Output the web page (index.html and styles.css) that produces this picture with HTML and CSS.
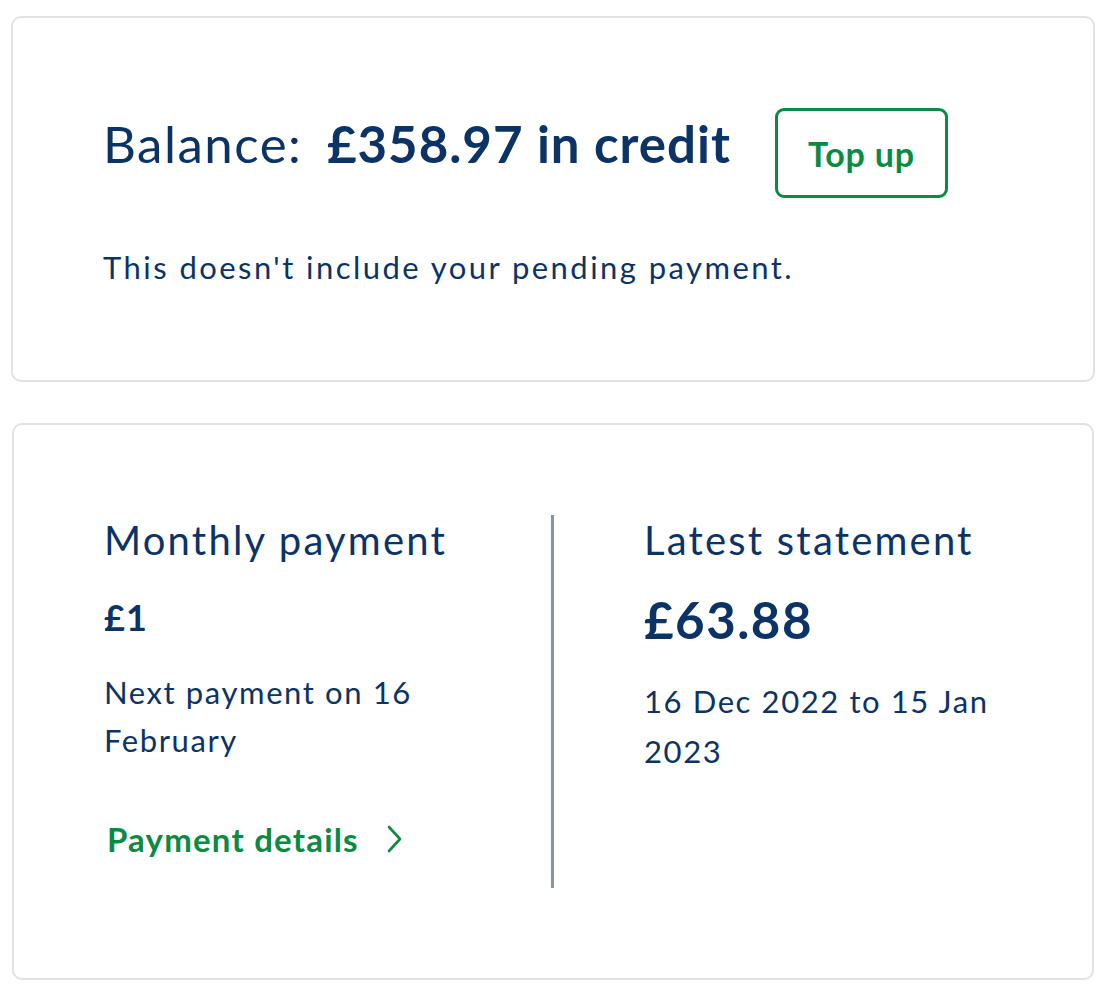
FILE: index.html
```html
<!DOCTYPE html>
<html lang="en">
<head>
<meta charset="utf-8">
<title>Balance</title>
<link rel="stylesheet" href="styles.css">
</head>
<body>
<main class="page">
  <section class="card balance-card">
    <div class="balance-row">
      <h1 class="balance-title">Balance: <strong class="balance-amount">£358.97 in credit</strong></h1>
      <button class="btn-outline" type="button">Top up</button>
    </div>
    <p class="body-text">This doesn't include your pending payment.</p>
  </section>

  <section class="card summary-card">
    <div class="col col-left">
      <h2 class="col-title">Monthly payment</h2>
      <p class="amount-small">£1</p>
      <p class="body-text">Next payment on 16 February</p>
      <a class="link" href="#">Payment details
        <svg class="chev" width="16" height="28" viewBox="0 0 16 28" aria-hidden="true"><path d="M2 2 L13 14 L2 26" fill="none" stroke="currentColor" stroke-width="2.6" stroke-linecap="round" stroke-linejoin="round"/></svg>
      </a>
    </div>
    <div class="divider"></div>
    <div class="col col-right">
      <h2 class="col-title">Latest statement</h2>
      <p class="amount-large">£63.88</p>
      <p class="body-text">16 Dec 2022 to 15 Jan 2023</p>
    </div>
  </section>
</main>
</body>
</html>
```

FILE: styles.css
```css
* { box-sizing: border-box; }
html, body { margin: 0; padding: 0; background: #ffffff; }
body {
  font-family: Lato, "Noto Sans", sans-serif;
  color: #0b3366;
}
.page {
  padding: 16px 8px 0 11px;
  display: flex;
  flex-direction: column;
  gap: 41px;
}
.card {
  background: #fff;
  border: 2px solid #e2e2e4;
  border-radius: 10px;
}
.balance-card {
  width: 1084px;
  height: 366px;
  padding: 90px 0 0 90px;
}
.balance-row {
  display: flex;
  align-items: flex-start;
  gap: 44px;
}
.balance-title {
  margin: 10px 0 0;
  font-size: 51px;
  font-weight: 400;
  line-height: 51px;
  letter-spacing: 1.5px;
}
.balance-amount {
  font-weight: 700;
  margin-left: 10px;
  letter-spacing: 1px;
}
.btn-outline {
  font-family: inherit;
  width: 173px;
  height: 90px;
  border: 3px solid #0b8a43;
  border-radius: 9px;
  background: #fff;
  color: #0b8a43;
  font-size: 34px;
  font-weight: 700;
  letter-spacing: 0.8px;
  padding: 0;
}
.body-text {
  margin: 0;
  font-size: 31px;
  line-height: 48px;
  letter-spacing: 1.6px;
}
.balance-card .body-text {
  margin-top: 45px;
  letter-spacing: 2.45px;
}
.summary-card {
  margin-left: 1px;
  width: 1082px;
  height: 557px;
  display: flex;
  padding: 91px 93px 0 90px;
}
.col-left { width: 447px; flex: 0 0 447px; }
.col-left .body-text { max-width: 400px; margin: 29px 0 0; }
.col-right { padding-left: 90px; flex: 1 1 auto; }
.col-right .body-text { line-height: 50px; margin-top: 28px; }
.divider {
  flex: 0 0 3px;
  width: 3px;
  height: 373px;
  margin-top: -1px;
  background: #8593a6;
}
.col-title {
  margin: 0;
  font-size: 40px;
  font-weight: 400;
  line-height: 48px;
  letter-spacing: 2.2px;
}
.amount-small {
  margin: 31px 0 0;
  font-size: 36px;
  font-weight: 700;
  line-height: 44px;
  letter-spacing: 1px;
}
.amount-large {
  margin: 28px 0 0;
  font-size: 51px;
  font-weight: 700;
  line-height: 56px;
  letter-spacing: 1.5px;
}
.link {
  display: flex;
  width: fit-content;
  align-items: center;
  gap: 28px;
  margin: 55px 0 0 3px;
  color: #0b8a43;
  font-size: 33px;
  line-height: 40px;
  font-weight: 700;
  letter-spacing: 1.2px;
  text-decoration: none;
}
.chev { display: block; }
```
